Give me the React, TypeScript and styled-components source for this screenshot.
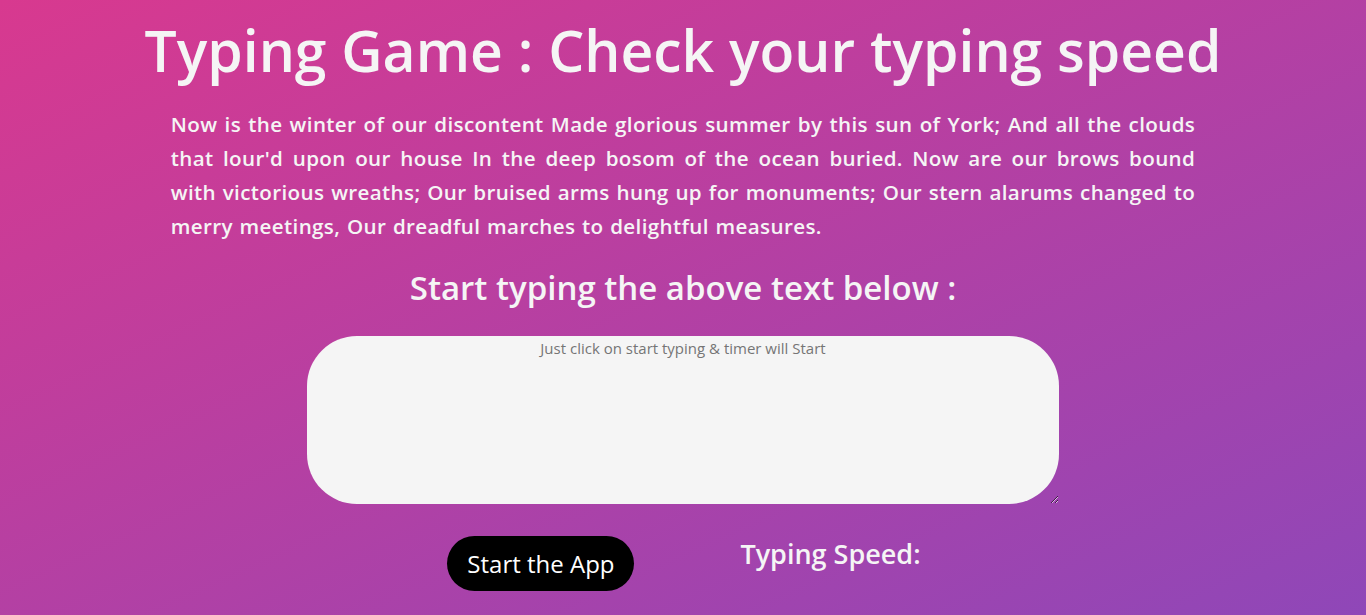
import React from 'react';
import styled, { createGlobalStyle } from 'styled-components';

const GlobalStyle = createGlobalStyle`
  html, body {
    margin: 0;
    padding: 0;
    height: 100%;
  }
  body {
    font-family: "Open Sans", "Noto Sans", sans-serif;
    background: linear-gradient(to bottom right, #d8398f, #8f47b8);
    min-height: 615px;
    overflow: hidden;
  }
`;

const Page = styled.main`
  display: flex;
  flex-direction: column;
  align-items: center;
  color: #f5f5f5;
  min-height: 615px;
`;

const Title = styled.h1`
  margin: 14px 0 0;
  font-size: 57px;
  font-weight: 600;
  line-height: 72px;
  text-align: center;
`;

const Passage = styled.p`
  width: 75%;
  margin: 21px 0 0;
  font-size: 20.6px;
  font-weight: 600;
  line-height: 34px;
  letter-spacing: 0.36px;
  word-spacing: 1px;
  text-align: justify;
`;

const SubTitle = styled.h2`
  margin: 23px 0 0;
  font-size: 33px;
  font-weight: 600;
  line-height: 44px;
  text-align: center;
`;

const InputBox = styled.textarea`
  box-sizing: border-box;
  width: 55%;
  height: 168px;
  margin-top: 26px;
  border: none;
  border-radius: 50px;
  background: #f5f5f5;
  font-family: "Open Sans", "Noto Sans", sans-serif;
  font-size: 15px;
  text-align: center;
  padding: 2px 10px;
  outline: none;
  &::placeholder {
    color: #757575;
  }
`;

const Controls = styled.div`
  display: flex;
  align-items: flex-start;
  gap: 106px;
  margin-top: 32px;
  padding-left: 2px;
`;

const StartButton = styled.button`
  width: 187px;
  height: 55px;
  border: none;
  border-radius: 28px;
  background: #000;
  color: #fff;
  font-family: "Open Sans", "Noto Sans", sans-serif;
  font-size: 24px;
  cursor: pointer;
`;

const Speed = styled.h3`
  margin: -1px 0 0;
  font-size: 27px;
  font-weight: 600;
`;

export default function App() {
  return (
    <>
      <GlobalStyle />
      <Page>
        <Title>Typing Game : Check your typing speed</Title>
        <Passage>
          Now is the winter of our discontent Made glorious summer by this sun of York; And all the clouds
          that lour'd upon our house In the deep bosom of the ocean buried. Now are our brows bound with
          victorious wreaths; Our bruised arms hung up for monuments; Our stern alarums changed to merry
          meetings, Our dreadful marches to delightful measures.
        </Passage>
        <SubTitle>Start typing the above text below :</SubTitle>
        <InputBox placeholder="Just click on start typing & timer will Start" />
        <Controls>
          <StartButton>Start the App</StartButton>
          <Speed>Typing Speed:</Speed>
        </Controls>
      </Page>
    </>
  );
}
